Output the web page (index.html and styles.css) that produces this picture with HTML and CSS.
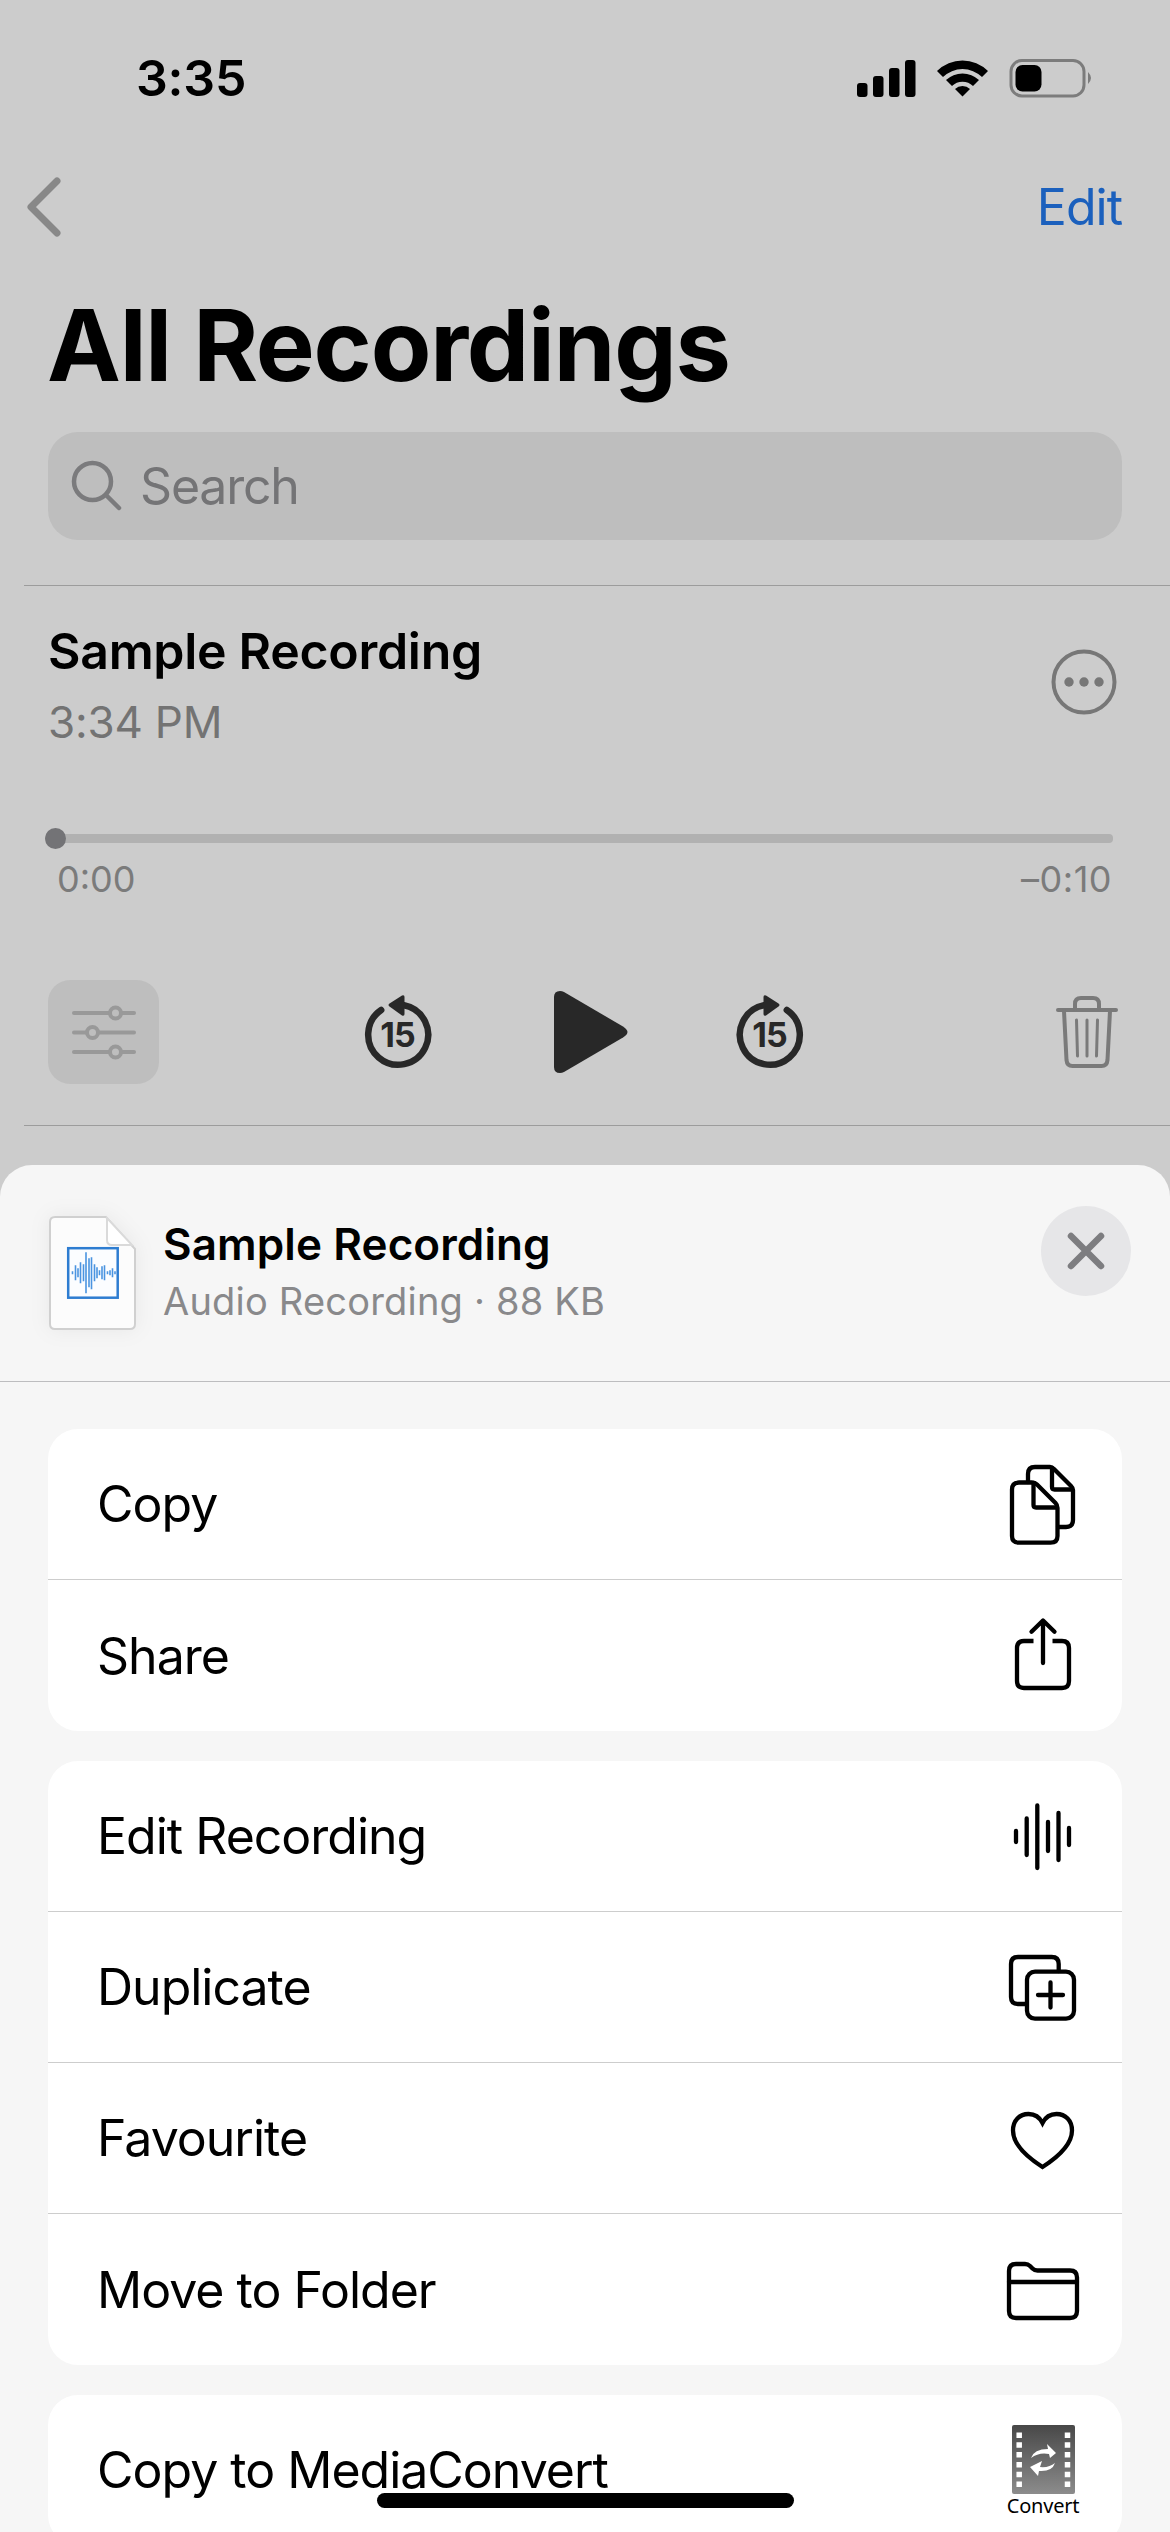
FILE: index.html
```html
<!DOCTYPE html>
<html lang="en">
<head>
    <title>All Recordings</title>
    <meta charset="utf-8">
    <link rel="stylesheet" href="styles.css">
</head>
<body>

<div id="recordings">
    <div class="status">
        <span class="time">3:35</span>
        <svg width="236" height="40" viewBox="0 0 236 40">
            <rect x="1" y="25" width="10.500" height="14" rx="3"/>
            <rect x="17" y="18" width="10.500" height="21" rx="3"/>
            <rect x="33" y="10" width="10.500" height="29" rx="3"/>
            <rect x="49" y="2" width="10.500" height="37" rx="3"/>
            <path d="M81 13 A36 36 0 0 1 132 13 L126 19 A28 28 0 0 0 87 19 Z"/>
            <path d="M90 22 A24 24 0 0 1 123 22 L117 28 A15 15 0 0 0 96 28 Z"/>
            <path d="M99 31 A11 11 0 0 1 114 31 L106.500 38.500 Z"/>
            <rect x="155" y="2.500" width="73" height="35.500" rx="11" fill="none" stroke="#7c7c7c" stroke-width="3"/>
            <rect x="159.500" y="7" width="26" height="26.500" rx="7"/>
            <path d="M232 14 q6 6 0 12 z" fill="#7c7c7c"/>
        </svg>
    </div>

    <div class="nav">
        <svg width="40" height="60" viewBox="0 0 40 60"><path d="M32 4 L6 30 L32 56" fill="none" stroke="#888" stroke-width="7" stroke-linecap="round" stroke-linejoin="round"/></svg>
        <span class="edit">Edit</span>
    </div>

    <h1>All Recordings</h1>

    <div class="search">
        <svg width="52" height="52" viewBox="0 0 52 52" fill="none" stroke="#7b7b7d" stroke-width="4.500" stroke-linecap="round"><circle cx="21.500" cy="21.500" r="18.500"/><path d="M35 35 L48 48"/></svg>
        <span>Search</span>
    </div>

    <div class="recording">
        <div class="recording-head">
            <div>
                <div class="name">Sample Recording</div>
                <div class="when">3:34 PM</div>
            </div>
            <svg class="more" width="68" height="68" viewBox="0 0 68 68"><circle cx="34" cy="34" r="30.500" fill="none" stroke="#777" stroke-width="4"/><g fill="#777"><circle cx="19" cy="34" r="4.700"/><circle cx="34" cy="34" r="4.700"/><circle cx="49" cy="34" r="4.700"/></g></svg>
        </div>

        <div class="slider"><div class="knob"></div></div>
        <div class="times"><span>0:00</span><span class="left">–0:10</span></div>

        <div class="controls">
            <div class="options">
                <svg width="66" height="56" viewBox="0 0 66 56" fill="#bebebe" stroke="#999" stroke-width="4" stroke-linecap="round">
                    <path d="M3 9 H63 M3 28.500 H63 M3 48 H63"/>
                    <circle cx="44.500" cy="9" r="5.500"/><circle cx="21.500" cy="28.500" r="5.500"/><circle cx="44.500" cy="48" r="5.500"/>
                </svg>
            </div>
            <div class="playback">
                <div class="skip">
                    <svg width="70" height="78" viewBox="0 0 70 78">
                        <path d="M18.200 17 A30 30 0 1 0 41 12.300" fill="none" stroke="#282828" stroke-width="6.500" stroke-linecap="round"/>
                        <path d="M26.500 13.500 Q24.500 12 26.500 10.500 L39 2.500 Q41.500 1.500 41.500 4 V21 Q41.500 23.500 39 22.500 Z" fill="#282828"/>
                    </svg>
                    <span>15</span>
                </div>
                <svg class="play" width="76" height="84" viewBox="0 0 76 84"><path d="M1 7 Q1 1 7 1 Q9 1 11 2 L70 36.500 Q74.500 39.500 74.500 42 Q74.500 44.500 70 47.500 L11 82 Q9 83 7 83 Q1 83 1 77 Z" fill="#282828"/></svg>
                <div class="skip">
                    <svg width="70" height="78" viewBox="0 0 70 78">
                        <path d="M51.800 17 A30 30 0 1 1 29 12.300" fill="none" stroke="#282828" stroke-width="6.500" stroke-linecap="round"/>
                        <path d="M43.500 13.500 Q45.500 12 43.500 10.500 L31 2.500 Q28.500 1.500 28.500 4 V21 Q28.500 23.500 31 22.500 Z" fill="#282828"/>
                    </svg>
                    <span>15</span>
                </div>
            </div>
            <svg width="64" height="74" viewBox="0 0 64 74" fill="none" stroke="#7a7a7a" stroke-width="4" stroke-linecap="round" stroke-linejoin="round">
                <path d="M4 15 H62"/>
                <path d="M21 14 V9 Q21 3 27 3 H39 Q45 3 45 9 V14"/>
                <path d="M10 16 L12.500 65 Q13 71 18.500 71 H47.500 Q53 71 53.500 65 L56 16"/>
                <path d="M22.500 25 L23.500 61 M33 25 V61 M43.500 25 L42.500 61" stroke-width="3"/>
            </svg>
        </div>
    </div>
</div>

<div id="sheet">
    <div class="sheet-head">
        <svg class="doc" width="90" height="118" viewBox="0 0 90 118">
            <path d="M7 2 H58 L87 34 V109 Q87 114 82 114 H7 Q2 114 2 109 V7 Q2 2 7 2 Z" fill="#fcfcfc" stroke="#d0d0d0" stroke-width="2"/>
            <path d="M59 3 V25 Q59 30 64 30 H84 Z" fill="#fff" stroke="#dadada" stroke-width="2"/>
            <rect x="20.200" y="33.200" width="49.500" height="49.500" fill="#fbfdff" stroke="#2e7dd1" stroke-width="2.500"/>
            <path transform="translate(0 -.8)" d="M24.500 57 v3 M27.500 51 v15 M30 54 v9 M32.500 48 v21 M35.500 50 v17 M38 38 v41 M41 44 v29 M43.500 43 v32 M46.500 50 v17 M49 53 v11 M51.500 56 v5 M54 52 v13 M56.500 51 v15 M59.500 57 v3 M62 56 v5 M64.500 54 v9 M67 57 v3" stroke="#4a94e0" stroke-width="1.600"/>
        </svg>
        <div class="file">
            <div class="file-name">Sample Recording</div>
            <div class="file-info">Audio Recording · 88 KB</div>
        </div>
        <div class="close">
            <svg width="38" height="38" viewBox="0 0 38 38"><path d="M4 4 L34 34 M34 4 L4 34" stroke="#7d7d80" stroke-width="6.500" stroke-linecap="round"/></svg>
        </div>
    </div>

    <div class="group">
        <div class="row">
            <span>Copy</span>
            <svg width="84" height="84" viewBox="0 0 84 84">
                <path d="M27 20 V12 Q27 5 34 5 H49 Q51 5 53 7 L70 24 Q72 26 72 28 V58 Q72 65 65 65 H57"/>
                <path d="M51 6 V25 Q51 27.500 53.500 27.500 H71"/>
                <path d="M18 20.500 H31 Q34 20.500 36 22.500 L54.500 41 Q56.500 43 56.500 46 V74 Q56.500 80.700 49.500 80.700 H18 Q11 80.700 11 74 V27.500 Q11 20.500 18 20.500 Z"/>
                <path d="M32.500 21 V43 Q32.500 45.500 35 45.500 H56"/>
            </svg>
        </div>
        <div class="row">
            <span>Share</span>
            <svg width="84" height="84" viewBox="0 0 84 84">
                <path d="M42 49 V7 M30.500 17.800 L42 6.500 L53.500 17.800"/>
                <path d="M32.500 27 H23 Q16 27 16 34 V67 Q16 74 23 74 H61 Q68 74 68 67 V34 Q68 27 61 27 H51.500" stroke-linecap="butt"/>
            </svg>
        </div>
    </div>

    <div class="group">
        <div class="row">
            <span>Edit Recording</span>
            <svg width="84" height="84" viewBox="0 0 84 84"><path d="M15 37 V48 M25.700 24.500 V61 M36.300 11.500 V74 M47 28 V57 M57.500 19 V66 M68 34 V51"/></svg>
        </div>
        <div class="row">
            <span>Duplicate</span>
            <svg width="84" height="84" viewBox="0 0 84 84">
                <path d="M57.700 26 V19 Q57.700 12 50.700 12 H17 Q10 12 10 19 V52 Q10 59 17 59 H25"/>
                <rect x="26" y="26.700" width="47" height="47" rx="8"/>
                <path d="M49.500 37.500 V62.500 M37 50 H62"/>
            </svg>
        </div>
        <div class="row">
            <span>Favourite</span>
            <svg width="84" height="84" viewBox="0 0 84 84"><path d="M41.500 71 C22 58.500 12 47 12 34.500 C12 24.500 18.500 18 27.500 18 C33.500 18 38.500 21 41.500 27 C44.500 21 49.500 18 55.500 18 C64.500 18 71 24.500 71 34.500 C71 47 61 58.500 41.500 71 Z" stroke-linejoin="miter"/></svg>
        </div>
        <div class="row">
            <span>Move to Folder</span>
            <svg width="84" height="84" viewBox="0 0 84 84">
                <path d="M15 16 H24 Q27 16 29 18 L31.500 20.500 Q33.500 22.500 36.500 22.500 H69 Q76 22.500 76 29.500 V63 Q76 70 69 70 H15 Q8 70 8 63 V23 Q8 16 15 16 Z"/>
                <path d="M8 34 H76"/>
            </svg>
        </div>
    </div>

    <div class="group">
        <div class="row">
            <span>Copy to MediaConvert</span>
            <div class="convert">
                <svg width="63" height="69" viewBox="0 0 63 69">
                    <defs><linearGradient id="film" x1="0" y1="0" x2="0" y2="1"><stop offset="0" stop-color="#484848"/><stop offset="1" stop-color="#8c8c8c"/></linearGradient></defs>
                    <rect width="63" height="69" rx="2" fill="url(#film)"/>
                    <path d="M7.200 7.500 V63 M55.500 7.500 V63" stroke="#fff" stroke-width="5.500" stroke-dasharray="5.500 4.300"/>
                    <path d="M19 33 Q22 24 36 24 L35 19 L44 28 L38 33 L37 29 Q27 27 19 33 Z M43 38 Q40 47 27 46 L26 51 L18 42 L30 36 L28 42 Q37 43 43 38 Z" fill="#fff"/>
                </svg>
                <span>Convert</span>
            </div>
        </div>
    </div>
</div>

<div id="home"></div>

</body>
</html>
```
FILE: styles.css
```css
* {
    box-sizing: border-box;
}
html, body {
    height: 2532px;
    margin: 0;
    overflow: hidden;
}
body {
    position: relative;
    display: flex;
    flex-direction: column;
    background: #ccc;
    color: #000;
    font-family: Inter, "Liberation Sans", sans-serif;
    font-size: 50px;
    line-height: 60px;
}
svg {
    display: block;
    flex: none;
}

#recordings {
    height: 1165px;
    flex: none;
}
.status {
    display: flex;
    justify-content: space-between;
    align-items: center;
    height: 156px;
    padding: 0 78px 0 136px;
}
.time {
    font-size: 50px;
    font-weight: 600;
    letter-spacing: -0.2px;
}
.nav {
    display: flex;
    justify-content: space-between;
    align-items: center;
    height: 102px;
    padding: 0 48px 0 25px;
}
.edit {
    color: #1b60bd;
    letter-spacing: -1px;
}
h1 {
    margin: 27px 47px 0;
    height: 120px;
    font-size: 99px;
    font-weight: 700;
    line-height: 120px;
    letter-spacing: -1.2px;
}
.search {
    display: flex;
    align-items: center;
    gap: 17px;
    height: 108px;
    margin: 27px 48px 45px;
    padding-left: 23px;
    border-radius: 30px;
    background: #bebebe;
    color: #747476;
    letter-spacing: -1.2px;
}

.recording {
    height: 541px;
    margin-left: 24px;
    padding: 38px 52px 0 24px;
    border-top: 1px solid #9c9c9c;
    border-bottom: 1px solid #9c9c9c;
}
.recording-head {
    display: flex;
    justify-content: space-between;
    height: 134px;
}
.name {
    margin-top: -5px;
    font-weight: 600;
    line-height: 64px;
    letter-spacing: -0.3px;
}
.when {
    color: #737373;
    font-size: 44px;
    line-height: 78px;
    letter-spacing: -0.2px;
}
.more {
    margin-top: 24px;
}
.slider {
    height: 9px;
    margin: 76px 5px 0 -3px;
    border-radius: 4px;
    background: #b1b1b1;
}
.knob {
    position: relative;
    top: -6px;
    width: 21px;
    height: 21px;
    border-radius: 50%;
    background: #737376;
}
.times {
    display: flex;
    justify-content: space-between;
    margin: 14px 6px 0 9px;
    color: #7b7b7b;
    font-size: 36px;
    line-height: 44px;
}
.left {
    letter-spacing: 0.5px;
}
.controls {
    display: flex;
    justify-content: space-between;
    align-items: center;
    height: 104px;
    margin-top: 79px;
}
.options {
    display: flex;
    align-items: center;
    justify-content: center;
    width: 111px;
    height: 104px;
    border-radius: 22px;
    background: #bebebe;
}
.playback {
    display: flex;
    align-items: center;
    margin-right: 46px;
}
.play {
    margin: 0 106px 0 120px;
}
.skip {
    display: grid;
    place-items: center;
}
.skip svg, .skip span {
    grid-area: 1 / 1;
}
.skip span {
    padding-top: 6px;
    color: #282828;
    font-size: 34px;
    font-weight: 700;
    line-height: 40px;
    letter-spacing: -1px;
}

#sheet {
    flex: 1;
    overflow: hidden;
    border-radius: 32px 32px 0 0;
    background: #f6f6f6;
}
.sheet-head {
    display: flex;
    height: 217px;
    padding: 50px 39px 0 48px;
    border-bottom: 1px solid #bdbdbf;
}
.doc {
    filter: drop-shadow(0 0 10px rgba(0,0,0,0.06));
}
.file {
    flex: 1;
    padding: 1px 0 0 25px;
}
.file-name {
    font-size: 44px;
    font-weight: 600;
    line-height: 56px;
    letter-spacing: 0.1px;
}
.file-info {
    color: #89898b;
    font-size: 38px;
    line-height: 58px;
    letter-spacing: 0.2px;
}
.close {
    display: flex;
    align-items: center;
    justify-content: center;
    width: 90px;
    height: 90px;
    margin-top: -9px;
    border-radius: 50%;
    background: #e6e6e8;
}

.group {
    margin: 0 48px 30px;
    border-radius: 30px;
    background: #fff;
}
.sheet-head + .group {
    margin-top: 47px;
}
.row {
    display: flex;
    justify-content: space-between;
    align-items: center;
    height: 150px;
    padding: 0 37px 0 49px;
    letter-spacing: -1px;
}
.row + .row {
    height: 151px;
    border-top: 1px solid #cdcdcd;
}
.row + .row:last-child {
    height: 152px;
}
.row > svg {
    overflow: visible;
    fill: none;
    stroke: #000;
    stroke-width: 4.3;
    stroke-linecap: round;
    stroke-linejoin: round;
}
.convert {
    display: flex;
    flex-direction: column;
    align-items: center;
    width: 84px;
    padding-top: 3px;
    font: 20px/24px "Noto Sans", sans-serif;
    letter-spacing: -0.2px;
}

#home {
    position: absolute;
    left: 377px;
    top: 2493px;
    width: 417px;
    height: 15px;
    border-radius: 8px;
    background: #000;
}
```
